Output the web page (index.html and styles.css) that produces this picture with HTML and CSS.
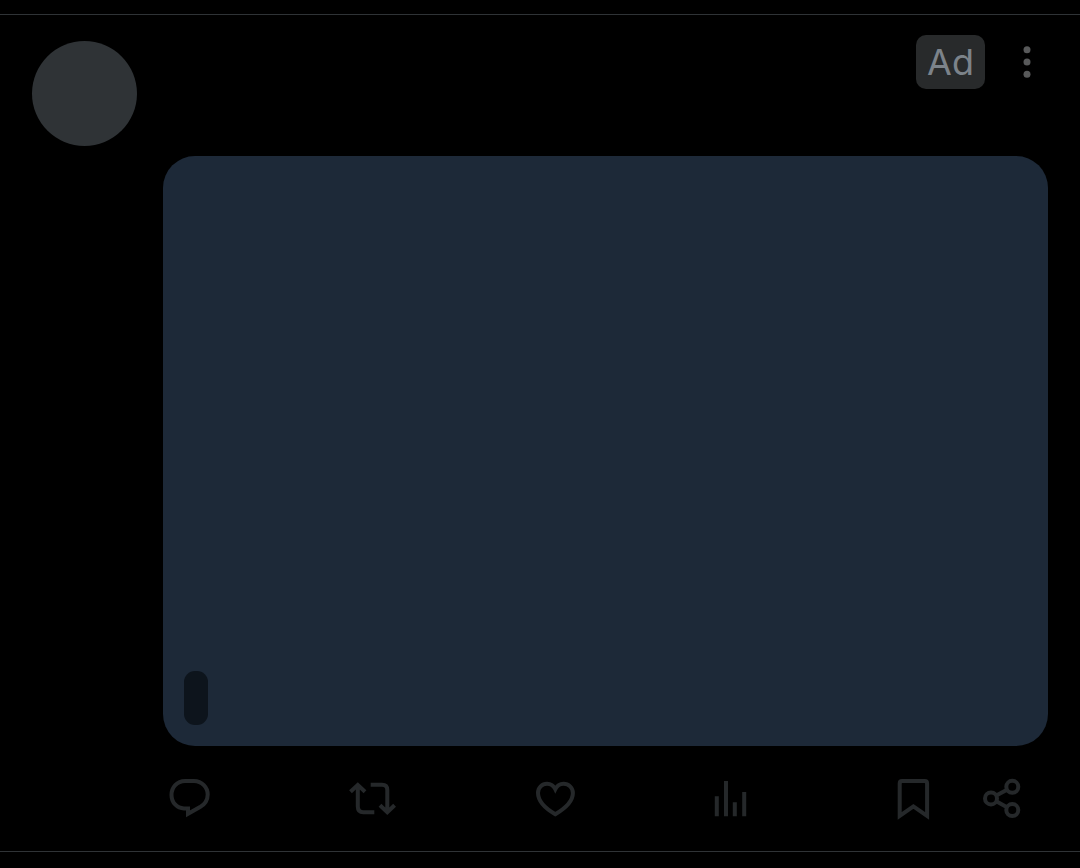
FILE: index.html
```html
<!DOCTYPE html>
<html lang="en">
<head>
  <meta charset="UTF-8" />
  <meta name="viewport" content="width=device-width, initial-scale=1.0" />
  <title>Post</title>
  <link rel="stylesheet" href="styles.css">
</head>
<body>

  <article class="post">
    <div class="avatar"></div>

    <div class="post-body">
      <header class="post-header">
        <span class="ad-badge">Ad</span>
        <button class="more-button" type="button" aria-label="More">
          <svg viewBox="0 0 42 54">
            <circle cx="21" cy="14.8" r="3.5" />
            <circle cx="21" cy="27" r="3.5" />
            <circle cx="21" cy="39.2" r="3.5" />
          </svg>
        </button>
      </header>

      <div class="media">
        <span class="media-label"></span>
      </div>

      <footer class="actions">
        <button class="action" type="button" aria-label="Reply">
          <svg viewBox="0 0 52 52">
            <path d="M25 36.4H21C14 36.4 8.5 30.4 8.5 22.9S14 8.9 22 8.9H31C39 8.9 44.7 15.4 44.7 22.4C44.7 28.4 41.5 32.4 37 35.1L25 41.8Z" />
          </svg>
        </button>
        <button class="action" type="button" aria-label="Repost">
          <svg viewBox="0 0 52 52">
            <path d="M6.5 19.8L13.8 12.9L21 19.8M13.8 13V34.5Q13.8 40.2 19.3 40.2H30.3" />
            <path d="M26.7 12.8H38Q43.3 12.8 43.3 18V40M36 33.3L43.3 40.2L50.6 33.3" />
          </svg>
        </button>
        <button class="action" type="button" aria-label="Like">
          <svg viewBox="0 0 52 52">
            <path d="M30.3 17.2C28.5 13.5 25.5 11.8 22 11.8C17 11.8 13 15.5 13 21C13 30 20.5 36.5 30.3 42.2C40 36.5 47.9 30 47.9 21C47.9 15.5 43.6 11.8 38.6 11.8C35.1 11.8 32.1 13.5 30.3 17.2Z" />
          </svg>
        </button>
        <button class="action" type="button" aria-label="Views">
          <svg viewBox="0 0 52 52">
            <path d="M10.8 44.2V24.2M20 44.2V9M28.8 44.2V30.3M38.2 44.2V20" />
          </svg>
        </button>
        <div class="action-group">
          <button class="action" type="button" aria-label="Bookmark">
            <svg viewBox="0 0 52 52">
              <path d="M12.7 43.9V11.4Q12.7 9.1 15.1 9.1H37.7Q40.1 9.1 40.1 11.4V43.9L26.4 34.4Z" />
            </svg>
          </button>
          <button class="action" type="button" aria-label="Share">
            <svg viewBox="0 0 52 52">
              <circle cx="15" cy="26.4" r="6" />
              <circle cx="36.3" cy="14.8" r="6" />
              <circle cx="36.3" cy="38.1" r="6" />
              <path d="M20.3 23.5L31 17.7M20.3 29.3L31 35.2" />
            </svg>
          </button>
        </div>
      </footer>
    </div>
  </article>

</body>
</html>
```

FILE: styles.css
```css
* {
  box-sizing: border-box;
}

body {
  margin: 0;
  padding-top: 14px;
  background-color: #000;
  font-family: Inter, sans-serif;
}

button {
  display: block;
  padding: 0;
  border: none;
  background: none;
  cursor: pointer;
}

svg {
  display: block;
  width: 100%;
  height: 100%;
}

.post {
  display: flex;
  gap: 26px;
  padding: 20px 32px 27px;
  border-top: 1px solid #2f3336;
  border-bottom: 1px solid #2f3336;
}

.avatar {
  flex-shrink: 0;
  width: 105px;
  height: 105px;
  margin-top: 6px;
  border-radius: 50%;
  background-color: #2f3336;
}

.post-body {
  flex: 1;
}

.post-header {
  display: flex;
  justify-content: flex-end;
  align-items: flex-start;
  gap: 21px;
  min-height: 121px;
}

.ad-badge {
  padding: 0 11px;
  border-radius: 10px;
  background-color: #282a2b;
  color: #7c838a;
  font-size: 36px;
  line-height: 54px;
}

.more-button {
  width: 42px;
  height: 54px;
}

.more-button svg {
  fill: #58595a;
}

.media {
  display: flex;
  align-items: flex-end;
  aspect-ratio: 3 / 2;
  padding: 21px;
  border-radius: 32px;
  background-color: #1d2938;
}

.media-label {
  width: 24px;
  height: 54px;
  border-radius: 11px;
  background-color: #0d141c;
}

.actions {
  display: flex;
  justify-content: space-between;
  margin-top: 26px;
  padding-right: 20px;
}

.action-group {
  display: flex;
  gap: 37px;
}

.action {
  width: 52px;
  height: 52px;
}

.action svg {
  fill: none;
  stroke: #25282a;
  stroke-width: 4;
}
```
